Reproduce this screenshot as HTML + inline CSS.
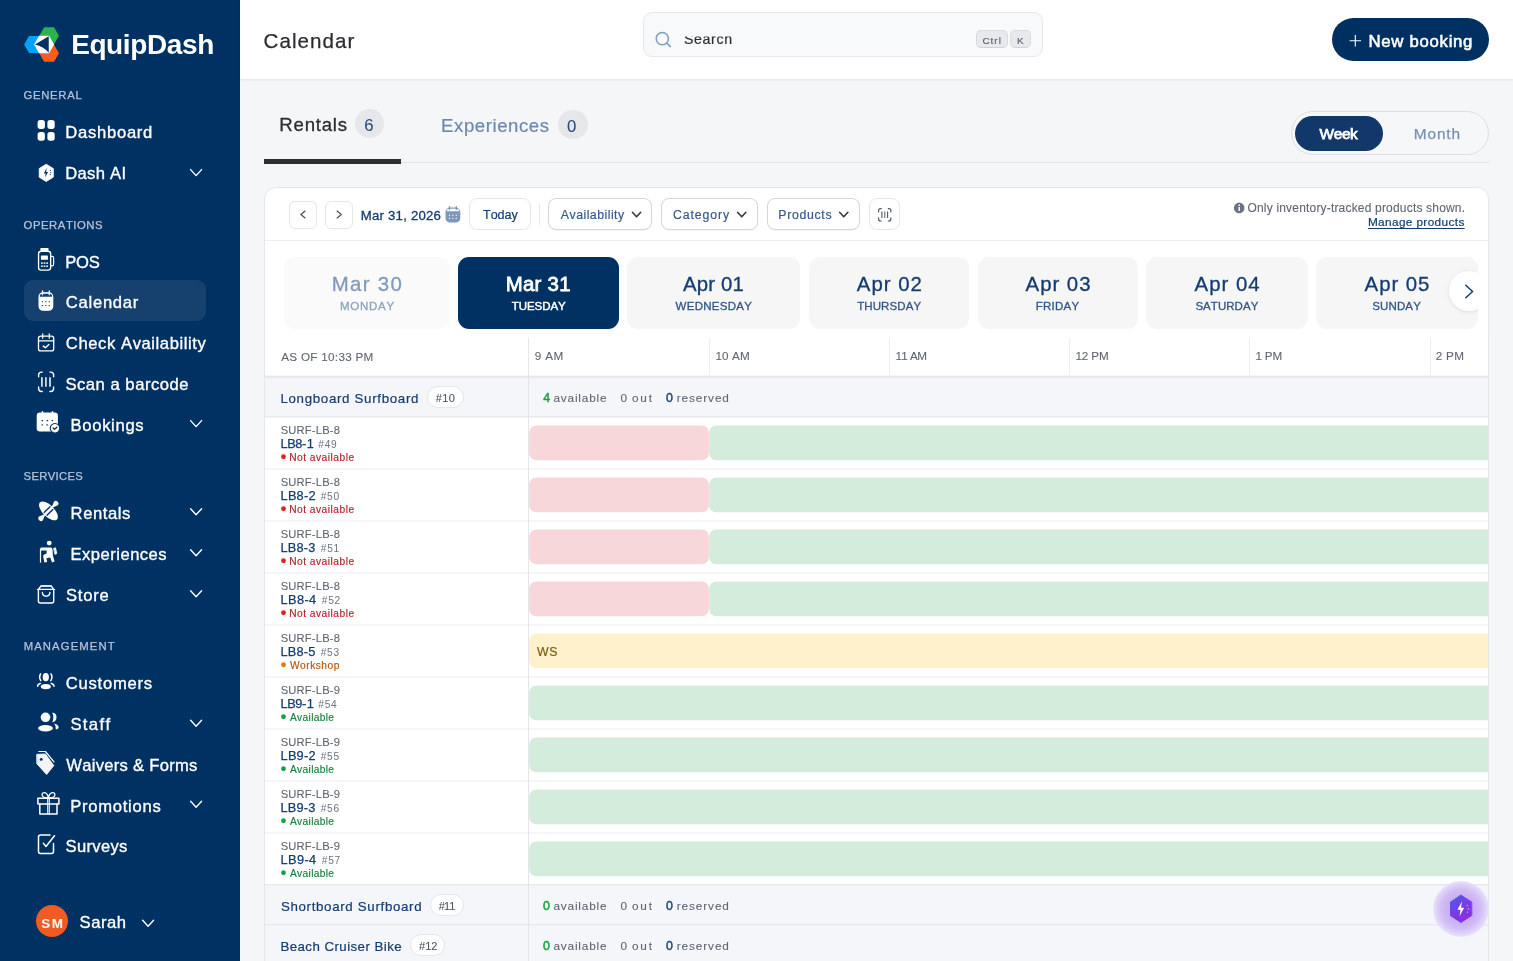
<!DOCTYPE html>
<html><head><meta charset="utf-8"><title>EquipDash - Calendar</title>
<style>
html,body{margin:0;padding:0;}
body{width:1513px;height:961px;overflow:hidden;position:relative;background:#f5f6f8;font-family:"Liberation Sans",sans-serif;}
.t{position:absolute;white-space:pre;line-height:1;font-kerning:none;font-family:"Liberation Sans",sans-serif;}
.b{position:absolute;box-sizing:border-box;}
svg{position:absolute;overflow:visible;}
</style></head><body>
<div class="b" style="left:0px;top:0px;width:240px;height:961px;background:#003163;"></div>
<div class="b" style="left:24.25px;top:280px;width:182.0px;height:40.5px;background:#16416f;border-radius:9px;"></div>
<div class="b" style="left:36.3px;top:905px;width:32.0px;height:32px;background:#f15a22;border-radius:50%;"></div>
<div class="b" style="left:240px;top:0px;width:1273px;height:79px;background:#fff;box-shadow:0 1px 2px rgba(20,30,50,.09);"></div>
<div class="b" style="left:643px;top:12px;width:400px;height:45px;background:#f8f9fb;border:1px solid #e6e8ec;border-radius:9px;"></div>
<div class="b" style="left:976px;top:30.4px;width:32px;height:18.0px;background:#e7e9ec;border:1px solid #d8dbe0;border-bottom-color:#cfd3d9;border-radius:5px;"></div>
<div class="b" style="left:1010px;top:30.4px;width:21px;height:18.0px;background:#e7e9ec;border:1px solid #d8dbe0;border-bottom-color:#cfd3d9;border-radius:5px;"></div>
<div class="b" style="left:1332px;top:18.25px;width:157.25px;height:42.25px;background:#002f61;border-radius:22px;"></div>
<div class="b" style="left:264px;top:162px;width:1225px;height:1px;background:#e1e3e7;"></div>
<div class="b" style="left:264px;top:159px;width:136.5px;height:4.5px;background:#2d2f33;"></div>
<div class="b" style="left:355px;top:108.75px;width:29.25px;height:28.75px;background:#e5e7eb;border-radius:50%;"></div>
<div class="b" style="left:557.5px;top:110px;width:30.5px;height:28.5px;background:#e5e7eb;border-radius:50%;"></div>
<div class="b" style="left:1290.5px;top:111.25px;width:198.75px;height:43.75px;background:#f6f7f9;border:1px solid #dcdfe4;border-radius:22px;"></div>
<div class="b" style="left:1295px;top:116px;width:88px;height:34.5px;background:#12386a;border-radius:18px;"></div>
<div class="b" style="left:264px;top:187px;width:1225px;height:793px;background:#fff;border:1px solid #e5e7eb;border-radius:12px 12px 0 0;"></div>
<div class="b" style="left:265px;top:240px;width:1223px;height:1.25px;background:#eceef1;"></div>
<div class="b" style="left:289.25px;top:200.75px;width:27.5px;height:27.75px;background:#fff;border:1px solid #e4e6ea;border-radius:6px;"></div>
<div class="b" style="left:325.25px;top:200.75px;width:27.75px;height:27.75px;background:#fff;border:1px solid #e4e6ea;border-radius:6px;"></div>
<div class="b" style="left:469.4px;top:198.4px;width:61.35000000000002px;height:31.599999999999994px;background:#fff;border:1px solid #e4e6ea;border-radius:8px;"></div>
<div class="b" style="left:539.25px;top:203.75px;width:1.0px;height:21.25px;background:#e5e7eb;"></div>
<div class="b" style="left:548.4px;top:198.4px;width:104.10000000000002px;height:31.599999999999994px;background:#fff;border:1px solid #d3d6db;border-radius:8px;box-shadow:0 1px 1px rgba(0,0,0,.04);"></div>
<div class="b" style="left:661.4px;top:198.4px;width:96.60000000000002px;height:31.599999999999994px;background:#fff;border:1px solid #d3d6db;border-radius:8px;box-shadow:0 1px 1px rgba(0,0,0,.04);"></div>
<div class="b" style="left:767px;top:198.4px;width:93px;height:31.599999999999994px;background:#fff;border:1px solid #d3d6db;border-radius:8px;box-shadow:0 1px 1px rgba(0,0,0,.04);"></div>
<div class="b" style="left:869px;top:198.4px;width:31px;height:31.599999999999994px;background:#fff;border:1px solid #e4e6ea;border-radius:8px;"></div>
<div class="b" style="left:284.25px;top:257.4px;width:165.75px;height:72.0px;background:#fafafa;border-radius:11px;"></div>
<div class="b" style="left:458.25px;top:257.4px;width:160.5px;height:72.0px;background:#003163;border-radius:11px;"></div>
<div class="b" style="left:627.25px;top:257.4px;width:172.5px;height:72.0px;background:#f6f6f7;border-radius:11px;"></div>
<div class="b" style="left:808.5px;top:257.4px;width:160.75px;height:72.0px;background:#f6f6f7;border-radius:11px;"></div>
<div class="b" style="left:977.75px;top:257.4px;width:160.0px;height:72.0px;background:#f6f6f7;border-radius:11px;"></div>
<div class="b" style="left:1146.25px;top:257.4px;width:161.75px;height:72.0px;background:#f6f6f7;border-radius:11px;"></div>
<div class="b" style="left:1316.25px;top:257.4px;width:161.25px;height:72.0px;background:#f6f6f7;border-radius:11px;"></div>
<div class="b" style="left:1440px;top:265px;width:37.5px;height:52px;overflow:hidden;"><div class="b" style="left:9.25px;top:6.25px;width:40px;height:40px;border-radius:50%;background:#fff;box-shadow:0 1px 4px rgba(0,0,0,.10);"></div></div>
<div class="b" style="left:709.0px;top:338px;width:1.0px;height:38px;background:#eceef1;"></div>
<div class="b" style="left:889.25px;top:338px;width:1.0px;height:38px;background:#eceef1;"></div>
<div class="b" style="left:1069.25px;top:338px;width:1.0px;height:38px;background:#eceef1;"></div>
<div class="b" style="left:1249.25px;top:338px;width:1.0px;height:38px;background:#eceef1;"></div>
<div class="b" style="left:1429.5px;top:338px;width:1.0px;height:38px;background:#eceef1;"></div>
<div class="b" style="left:265px;top:375px;width:1223px;height:1px;background:#f5f6f8;"></div>
<div class="b" style="left:265px;top:376px;width:1223px;height:1px;background:#e5e7eb;"></div>
<div class="b" style="left:265px;top:377px;width:1223px;height:1px;background:#ecedf2;"></div>
<div class="b" style="left:265px;top:378px;width:1223px;height:1px;background:#f1f3f7;"></div>
<div class="b" style="left:265px;top:379px;width:1223px;height:37px;background:#f4f6fa;"></div>
<div class="b" style="left:265px;top:416px;width:1223px;height:1px;background:#e6e8ed;"></div>
<div class="b" style="left:265px;top:417px;width:1223px;height:1px;background:#f3f4f7;"></div>
<div class="b" style="left:265px;top:884px;width:1223px;height:1px;background:#e6e8ed;"></div>
<div class="b" style="left:265px;top:885px;width:1223px;height:1px;background:#eef0f4;"></div>
<div class="b" style="left:265px;top:886px;width:1223px;height:38px;background:#f4f6fa;"></div>
<div class="b" style="left:265px;top:924px;width:1223px;height:1px;background:#e6e8ed;"></div>
<div class="b" style="left:265px;top:925px;width:1223px;height:1px;background:#eef0f4;"></div>
<div class="b" style="left:265px;top:926px;width:1223px;height:35px;background:#f4f6fa;"></div>
<div class="b" style="left:265px;top:468px;width:1223px;height:2px;background:#f6f6f8;"></div>
<div class="b" style="left:265px;top:520px;width:1223px;height:2px;background:#f6f6f8;"></div>
<div class="b" style="left:265px;top:572px;width:1223px;height:2px;background:#f6f6f8;"></div>
<div class="b" style="left:265px;top:624px;width:1223px;height:2px;background:#f6f6f8;"></div>
<div class="b" style="left:265px;top:676px;width:1223px;height:2px;background:#f6f6f8;"></div>
<div class="b" style="left:265px;top:728px;width:1223px;height:2px;background:#f6f6f8;"></div>
<div class="b" style="left:265px;top:780px;width:1223px;height:2px;background:#f6f6f8;"></div>
<div class="b" style="left:265px;top:832px;width:1223px;height:2px;background:#f6f6f8;"></div>
<div class="b" style="left:528.25px;top:338px;width:1.0px;height:623px;background:#e3e5ea;"></div>
<svg width="1513" height="961" viewBox="0 0 1513 961" style="left:0;top:0;"><path d="M537.1 425.4 H700.9 Q708.9 425.4 708.9 433.4 V452.2 Q708.9 460.2 700.9 460.2 H537.1 Q529.1 460.2 529.1 452.2 V433.4 Q529.1 425.4 537.1 425.4 Z" fill="#f8d7da"/><path d="M717.1 425.4 H1488 V460.2 H717.1 Q709.1 460.2 709.1 452.2 V433.4 Q709.1 425.4 717.1 425.4 Z" fill="#d4ecdb"/><circle cx="283.5" cy="456.8" r="2.45" fill="#dc2626"/><path d="M537.1 477.4 H700.9 Q708.9 477.4 708.9 485.4 V504.20000000000005 Q708.9 512.2 700.9 512.2 H537.1 Q529.1 512.2 529.1 504.20000000000005 V485.4 Q529.1 477.4 537.1 477.4 Z" fill="#f8d7da"/><path d="M717.1 477.4 H1488 V512.2 H717.1 Q709.1 512.2 709.1 504.20000000000005 V485.4 Q709.1 477.4 717.1 477.4 Z" fill="#d4ecdb"/><circle cx="283.5" cy="508.8" r="2.45" fill="#dc2626"/><path d="M537.1 529.4 H700.9 Q708.9 529.4 708.9 537.4 V556.2 Q708.9 564.2 700.9 564.2 H537.1 Q529.1 564.2 529.1 556.2 V537.4 Q529.1 529.4 537.1 529.4 Z" fill="#f8d7da"/><path d="M717.1 529.4 H1488 V564.2 H717.1 Q709.1 564.2 709.1 556.2 V537.4 Q709.1 529.4 717.1 529.4 Z" fill="#d4ecdb"/><circle cx="283.5" cy="560.8" r="2.45" fill="#dc2626"/><path d="M537.1 581.4 H700.9 Q708.9 581.4 708.9 589.4 V608.2 Q708.9 616.2 700.9 616.2 H537.1 Q529.1 616.2 529.1 608.2 V589.4 Q529.1 581.4 537.1 581.4 Z" fill="#f8d7da"/><path d="M717.1 581.4 H1488 V616.2 H717.1 Q709.1 616.2 709.1 608.2 V589.4 Q709.1 581.4 717.1 581.4 Z" fill="#d4ecdb"/><circle cx="283.5" cy="612.8" r="2.45" fill="#dc2626"/><path d="M537.1 633.4 H1488 V668.2 H537.1 Q529.1 668.2 529.1 660.2 V641.4 Q529.1 633.4 537.1 633.4 Z" fill="#fff1cc"/><circle cx="283.5" cy="664.8" r="2.45" fill="#e07b0c"/><path d="M537.1 685.4 H1488 V720.2 H537.1 Q529.1 720.2 529.1 712.2 V693.4 Q529.1 685.4 537.1 685.4 Z" fill="#d4ecdb"/><circle cx="283.5" cy="716.8" r="2.45" fill="#16a34a"/><path d="M537.1 737.4 H1488 V772.2 H537.1 Q529.1 772.2 529.1 764.2 V745.4 Q529.1 737.4 537.1 737.4 Z" fill="#d4ecdb"/><circle cx="283.5" cy="768.8" r="2.45" fill="#16a34a"/><path d="M537.1 789.4 H1488 V824.2 H537.1 Q529.1 824.2 529.1 816.2 V797.4 Q529.1 789.4 537.1 789.4 Z" fill="#d4ecdb"/><circle cx="283.5" cy="820.8" r="2.45" fill="#16a34a"/><path d="M537.1 841.4 H1488 V876.2 H537.1 Q529.1 876.2 529.1 868.2 V849.4 Q529.1 841.4 537.1 841.4 Z" fill="#d4ecdb"/><circle cx="283.5" cy="872.8" r="2.45" fill="#16a34a"/></svg>
<div class="b" style="left:1488px;top:338px;width:25px;height:623px;background:#f5f6f8;"></div>
<div class="b" style="left:1487.75px;top:338px;width:1.0px;height:623px;background:#e3e5ea;"></div>
<div class="b" style="left:426.5px;top:386.4px;width:37.0px;height:22.0px;background:#fff;border:1px solid #e4e6ea;border-radius:11px;"></div>
<div class="b" style="left:429.6px;top:894.4px;width:34.0px;height:22.0px;background:#fff;border:1px solid #e4e6ea;border-radius:11px;"></div>
<div class="b" style="left:410.2px;top:934.4px;width:35.10000000000002px;height:22.0px;background:#fff;border:1px solid #e4e6ea;border-radius:11px;"></div>
<div class="b" style="left:1433.2px;top:881px;width:55.59999999999991px;height:56px;border-radius:50%;background:radial-gradient(circle closest-side, #c9aff3 0%, #caB1f4 50%, #d3bff6 72%, #dfd2f9 88%, #eae3fb 100%);"></div>
<svg width="1513" height="961" viewBox="0 0 1513 961" style="left:0;top:0;" fill="none" stroke-linecap="round" stroke-linejoin="round">
<polygon points="43.83,44.50 38.91,53.03 29.05,53.03 24.13,44.50 29.05,35.97 38.91,35.97" fill="#00a2ff"/>
<polygon points="58.98,35.75 54.05,44.28 44.20,44.28 39.28,35.75 44.20,27.22 54.05,27.22" fill="#2bb24c"/>
<polygon points="58.98,53.25 54.05,61.78 44.20,61.78 39.28,53.25 44.20,44.72 54.05,44.72" fill="#f95d1e"/>
<polygon points="54.08,44.50 49.08,53.16 39.08,53.16 34.08,44.50 39.08,35.84 49.08,35.84" fill="#fff"/>
<path d="M34.9 44.5 L48.75 36.3 L48.75 52.7 Q43.5 46.6 34.9 44.5 Z" fill="#003163"/>
<rect x="37.6" y="120.1" width="7.3" height="8.8" rx="2.6" fill="#fff"/>
<rect x="47.4" y="120.1" width="7.3" height="8.8" rx="2.6" fill="#fff"/>
<rect x="37.6" y="131.9" width="7.3" height="8.8" rx="2.6" fill="#fff"/>
<rect x="47.4" y="131.9" width="7.3" height="8.8" rx="2.6" fill="#fff"/>
<g transform="translate(46.2 172.85) scale(0.93 1) translate(-46.2 -172.85)"><polygon points="53.73,177.20 46.20,181.55 38.67,177.20 38.67,168.50 46.20,164.15 53.73,168.50" fill="#fff" stroke="#fff" stroke-width="0.8"/></g>
<path d="M46.6 167.9 L43.9 173.4 L45.7 173.4 L45.2 177.5 L48 172 L46.2 172 Z" fill="#003163"/>
<circle cx="50.2" cy="170.4" r="0.55" fill="#003163"/><circle cx="50.8" cy="172.4" r="0.55" fill="#003163"/><circle cx="50.2" cy="174.4" r="0.55" fill="#003163"/>
<path d="M190.6 169.6 L196.1 175.6 L201.6 169.6" stroke="#fff" stroke-width="1.4"/>
<path d="M190.6 420.6 L196.1 426.6 L201.6 420.6" stroke="#fff" stroke-width="1.4"/>
<path d="M190.6 508.8 L196.1 514.8 L201.6 508.8" stroke="#fff" stroke-width="1.4"/>
<path d="M190.6 549.8 L196.1 555.8 L201.6 549.8" stroke="#fff" stroke-width="1.4"/>
<path d="M190.6 590.8 L196.1 596.8 L201.6 590.8" stroke="#fff" stroke-width="1.4"/>
<path d="M190.6 720.3 L196.1 726.3 L201.6 720.3" stroke="#fff" stroke-width="1.4"/>
<path d="M190.6 801.3 L196.1 807.3 L201.6 801.3" stroke="#fff" stroke-width="1.4"/>
<path d="M142.6 920.3 L148.1 926.3 L153.6 920.3" stroke="#fff" stroke-width="1.4"/>
<rect x="38.55" y="251.2" width="12.1" height="18.9" rx="2.6" stroke="#fff" stroke-width="1.35"/>
<rect x="40.4" y="248" width="8.1" height="3.2" rx="0.6" fill="#fff"/>
<path d="M50.8 256.4 H52.2 Q53.6 256.4 53.6 257.8 V264.4 Q53.6 265.8 52.2 265.8 H50.8" stroke="#fff" stroke-width="1.2"/>
<rect x="40.9" y="255.6" width="7" height="4.2" rx="0.4" fill="#fff"/>
<rect x="41" y="262.4" width="1.8" height="1.4" fill="#fff"/>
<rect x="43.6" y="262.4" width="1.8" height="1.4" fill="#fff"/>
<rect x="46.2" y="262.4" width="1.8" height="1.4" fill="#fff"/>
<rect x="41" y="265.5" width="1.8" height="1.4" fill="#fff"/>
<rect x="43.6" y="265.5" width="1.8" height="1.4" fill="#fff"/>
<rect x="46.2" y="265.5" width="1.8" height="1.4" fill="#fff"/>
<rect x="39.1" y="292.81600000000003" width="13.599999999999998" height="17.38399999999999" rx="3.9959999999999996" stroke="#fff" stroke-width="1.2" fill="#fff"/>
<path d="M39.8 296.66 V296.05400000000003 Q39.8 293.731 42.94 293.731 H48.86 Q52.0 293.731 52.0 296.05400000000003 V296.66 Z" fill="#16416f"/>
<path d="M42.496 290.90000000000003 V294.64000000000004" stroke="#fff" stroke-width="1.3"/>
<path d="M49.304 290.90000000000003 V294.64000000000004" stroke="#fff" stroke-width="1.3"/>
<rect x="41.896" y="301.16" width="1.2" height="1.1" fill="#16416f"/>
<rect x="45.3" y="301.16" width="1.2" height="1.1" fill="#16416f"/>
<rect x="48.704" y="301.16" width="1.2" height="1.1" fill="#16416f"/>
<rect x="41.896" y="304.998" width="1.2" height="1.1" fill="#16416f"/>
<rect x="45.3" y="304.998" width="1.2" height="1.1" fill="#16416f"/>
<rect x="48.704" y="304.998" width="1.2" height="1.1" fill="#16416f"/>
<rect x="446.1" y="208.204" width="13.600000000000012" height="13.795999999999985" rx="3.9960000000000035" stroke="#7e97bb" stroke-width="1.2" fill="#7e97bb"/>
<path d="M446.8 211.19 V210.701 Q446.8 208.8265 449.94 208.8265 H455.86 Q459.0 208.8265 459.0 210.701 V211.19 Z" fill="#fff"/>
<path d="M449.496 206.60000000000002 V209.56" stroke="#7e97bb" stroke-width="1.3"/>
<path d="M456.30400000000003 206.60000000000002 V209.56" stroke="#7e97bb" stroke-width="1.3"/>
<rect x="448.89599999999996" y="214.715" width="1.2" height="1.1" fill="#fff"/>
<rect x="452.29999999999995" y="214.715" width="1.2" height="1.1" fill="#fff"/>
<rect x="455.704" y="214.715" width="1.2" height="1.1" fill="#fff"/>
<rect x="448.89599999999996" y="217.81199999999998" width="1.2" height="1.1" fill="#fff"/>
<rect x="452.29999999999995" y="217.81199999999998" width="1.2" height="1.1" fill="#fff"/>
<rect x="455.704" y="217.81199999999998" width="1.2" height="1.1" fill="#fff"/>
<rect x="38.5" y="336.2" width="15.2" height="14.7" rx="2.2" stroke="#fff" stroke-width="1.3"/>
<path d="M38.5 340.9 H53.7 M42.65 333.9 V338.2 M49.3 333.9 V338.2" stroke="#fff" stroke-width="1.3"/>
<path d="M43.3 346.1 L45.4 347.8 L48.9 344.6" stroke="#fff" stroke-width="1.4"/>
<path d="M38.6 376.70000000000005 V375.1 Q38.6 372.1 41.6 372.1 H42.28 M49.92 372.1 H50.6 Q53.6 372.1 53.6 375.1 V376.70000000000005 M53.6 386.9 V388.5 Q53.6 391.5 50.6 391.5 H49.92 M42.28 391.5 H41.6 Q38.6 391.5 38.6 388.5 V386.9" stroke="#fff" stroke-width="1.4"/>
<path d="M41.9 377.3 V386.7" stroke="#fff" stroke-width="1.5" stroke-linecap="butt" opacity="1"/>
<path d="M45.9 377.3 V386.7" stroke="#fff" stroke-width="1.7" stroke-linecap="butt" opacity="0.85"/>
<path d="M50 377.3 V386.7" stroke="#fff" stroke-width="1.5" stroke-linecap="butt" opacity="1"/>
<path d="M878.6 211.9 V210.6 Q878.6 208.6 880.6 208.6 H881.24 M888.26 208.6 H888.9 Q890.9 208.6 890.9 210.6 V211.9 M890.9 217.7 V219 Q890.9 221 888.9 221 H888.26 M881.24 221 H880.6 Q878.6 221 878.6 219 V217.7" stroke="#4b5563" stroke-width="1.15"/>
<path d="M881.9 211.6 V218" stroke="#4b5563" stroke-width="1.1" stroke-linecap="butt" opacity="1"/>
<path d="M884.75 211.6 V218" stroke="#4b5563" stroke-width="1.2" stroke-linecap="butt" opacity="0.8"/>
<path d="M887.6 211.6 V218" stroke="#4b5563" stroke-width="1.1" stroke-linecap="butt" opacity="1"/>
<rect x="36.7" y="412.6" width="21.2" height="18.9" rx="3.2" fill="#fff"/>
<path d="M42.5 411.9 V414 M52.5 411.9 V414" stroke="#fff" stroke-width="1.6"/>
<rect x="41.599999999999994" y="420.0" width="1.4" height="1.2" fill="#003163"/>
<rect x="46.599999999999994" y="420.0" width="1.4" height="1.2" fill="#003163"/>
<rect x="51.699999999999996" y="420.0" width="1.4" height="1.2" fill="#003163"/>
<rect x="41.5" y="424.29999999999995" width="1.4" height="1.2" fill="#003163"/>
<rect x="46.5" y="424.29999999999995" width="1.4" height="1.2" fill="#003163"/>
<circle cx="55" cy="428.2" r="4.75" fill="#fff" stroke="#003163" stroke-width="1.1"/>
<path d="M53.1 428 L54.55 429.25 L56.9 427.3" stroke="#003163" stroke-width="1.3"/>
<g transform="rotate(-45 48.45 510.95)">
<ellipse cx="48.45" cy="510.95" rx="5.7" ry="12" fill="#fff"/>
<rect x="43.85" y="508.35" width="9.2" height="1.45" rx="0.4" fill="#003163"/>
<rect x="43.85" y="512.25" width="9.2" height="1.45" rx="0.4" fill="#003163"/>
<rect x="40.95" y="510.15" width="15" height="1.6" fill="#fff"/>
<path d="M54.650000000000006 510.15 L59.050000000000004 508.25 Q61.550000000000004 508.25 61.550000000000004 510.95 Q61.550000000000004 513.65 59.050000000000004 513.65 L54.650000000000006 511.75 Z" fill="#fff"/>
<path d="M42.25 510.15 L37.85 508.25 Q35.35 508.25 35.35 510.95 Q35.35 513.65 37.85 513.65 L42.25 511.75 Z" fill="#fff"/>
</g>
<circle cx="49.2" cy="543.1" r="2.45" fill="#fff"/>
<path d="M40.5 548.6 V562.6" stroke="#fff" stroke-width="1.2" stroke-linecap="butt"/>
<path d="M40.6 547.6 H50.6 Q52.3 547.6 52.5 549.2 L53 556 L54.6 561.6 L52 562.4 L50.2 557.6 L46.4 558.2 L47.2 562 L44.4 562.6 L43.2 556.6 Q43 555.2 44.2 554.6 L46.6 553.4 L46.6 550.6 H40.6 Z" fill="#fff"/>
<path d="M53.9 548.3 L55.5 547.8 L56.8 553.6 L55.2 554.2 Z" fill="#fff" stroke="#fff" stroke-width="0.8"/>
<path d="M38.4 589.4 V601 Q38.4 603 40.4 603 H51.7 Q53.7 603 53.7 601 V589.4 M37.6 589.4 H54.5 M38.4 589.4 L41 585.9 H51.2 L53.7 589.4" stroke="#fff" stroke-width="1.4"/>
<path d="M41 586 H51.2" stroke="#dfe5ec" stroke-width="1.9" stroke-linecap="butt"/>
<path d="M42.4 592.5 Q42.6 596.2 46.15 596.2 Q49.7 596.2 49.9 592.5" stroke="#fff" stroke-width="1.4"/>
<ellipse cx="45.8" cy="677.2" rx="3.1" ry="4.1" fill="#fff"/>
<ellipse cx="45.8" cy="686.6" rx="5" ry="2.6" fill="#fff"/>
<path d="M40.6 674 Q38.6 677.2 40.8 680.6 M51 674 Q53 677.2 50.8 680.6" stroke="#fff" stroke-width="1.5"/>
<path d="M37.6 686.2 Q37.6 683.8 40.4 683.4 M54 686.2 Q54 683.8 51.2 683.4" stroke="#fff" stroke-width="1.5"/>
<circle cx="45.5" cy="717.3" r="4.8" fill="#fff"/>
<ellipse cx="45.5" cy="728.2" rx="7.4" ry="3.2" fill="#fff"/>
<path d="M52.2 712.6 Q56.6 713 56.5 717.4 Q56.4 721.6 52.2 722.2 Q54.6 717.4 52.2 712.6 Z" fill="#fff"/>
<path d="M54.2 723.6 Q58.6 724.6 58.7 727.6 Q58.4 729.4 55.8 729.6 Q56.2 726 54.2 723.6 Z" fill="#fff"/>
<path d="M37.1 754.4 L45.4 754 L53.8 765.6 L46.6 774.4 L37.1 764 Z" fill="#f4f5f7" stroke="#f4f5f7" stroke-width="1" />
<circle cx="41.2" cy="759.4" r="1.45" fill="#003163"/>
<path d="M38.8 751.5 H45.4 L54 761.9" stroke="#fff" stroke-width="1.2"/>
<rect x="37.9" y="798.3" width="21" height="5.6" stroke="#fff" stroke-width="1.5"/>
<path d="M39.8 804 V814.1 H57 V804" stroke="#fff" stroke-width="1.5"/>
<path d="M47.7 798.3 V814 M49.3 798.3 V814" stroke="#fff" stroke-width="1.05"/>
<path d="M48.4 797.8 Q42.4 798 42.1 795 Q42.2 792.4 44.8 792.6 Q47.6 793.4 48.4 797.8 Q49.2 793.4 52.2 792.6 Q54.8 792.4 54.9 795 Q54.6 798 48.4 797.8" stroke="#fff" stroke-width="1.3"/>
<path d="M50 835 H40.6 Q38.5 835 38.5 837 V851.6 Q38.5 853.6 40.6 853.6 H51.4 Q53.5 853.6 53.5 851.6 V843.6" stroke="#fff" stroke-width="1.5"/>
<path d="M43.4 843.3 L46 846.5 L54.5 835.7" stroke="#fff" stroke-width="1.5"/>
<circle cx="662.3" cy="38.6" r="6.1" stroke="#7a9cc0" stroke-width="1.5"/><path d="M666.9 43.2 L670.4 46.6" stroke="#7a9cc0" stroke-width="1.5"/>
<path d="M1349.6 40.8 H1361 M1355.3 35.1 V46.5" stroke="#fff" stroke-width="1.1" stroke-linecap="butt"/>
<path d="M305.1 211.1 L300.9 214.5 L305.1 217.9" stroke="#4b5563" stroke-width="1.35"/>
<path d="M337.1 211.1 L341.3 214.5 L337.1 217.9" stroke="#4b5563" stroke-width="1.35"/>
<path d="M632.4 212.3 L636.55 216.8 L640.6999999999999 212.3" stroke="#2f343d" stroke-width="1.5"/>
<path d="M737.6 212.3 L741.75 216.8 L745.9 212.3" stroke="#2f343d" stroke-width="1.5"/>
<path d="M839.6 212.3 L843.75 216.8 L847.9 212.3" stroke="#2f343d" stroke-width="1.5"/>
<circle cx="1239.2" cy="207.9" r="5.3" fill="#6b7280"/><rect x="1238.5" y="206.9" width="1.5" height="4" fill="#fff"/><rect x="1238.5" y="204.4" width="1.5" height="1.5" fill="#fff"/>
<path d="M1465.8 285.2 L1472.6 291.5 L1465.8 297.8" stroke="#143c70" stroke-width="1.5"/>
<defs><linearGradient id="fg" x1="0.1" y1="0" x2="0.7" y2="1"><stop offset="0" stop-color="#4a5eea"/><stop offset="0.55" stop-color="#7a3ae6"/><stop offset="1" stop-color="#8d2fdc"/></linearGradient></defs>
<g transform="translate(1461 908.8) scale(0.885 1) translate(-1461 -908.8)"><polygon points="1472.86,915.65 1461.00,922.50 1449.14,915.65 1449.14,901.95 1461.00,895.10 1472.86,901.95" fill="url(#fg)" stroke="url(#fg)" stroke-width="1"/></g>
<path d="M1462 901.6 L1457.4 909.8 L1460.5 909.8 L1459.5 916.2 L1464.2 907.7 L1461.1 907.7 Z" fill="#fff"/>
<circle cx="1467.2" cy="905.6" r="0.8" fill="#b59af2"/><circle cx="1468.4" cy="908.8" r="0.9" fill="#b59af2"/><circle cx="1467.5" cy="912.2" r="0.7" fill="#b59af2"/>
</svg>
<div style="position:absolute;left:0;top:0;width:1513px;height:961px;will-change:transform;">
<span class="t" style="left:71.13px;top:31.00px;font-size:28px;color:#fff;letter-spacing:-0.391px;font-weight:700;">EquipDash</span>
<span class="t" style="left:23.56px;top:90.00px;font-size:11.3px;color:#b7c3d6;letter-spacing:0.698px;-webkit-text-stroke:0.25px #b7c3d6;">GENERAL</span>
<span class="t" style="left:23.59px;top:220.00px;font-size:11.3px;color:#b7c3d6;letter-spacing:0.552px;-webkit-text-stroke:0.25px #b7c3d6;">OPERATIONS</span>
<span class="t" style="left:23.61px;top:471.00px;font-size:11.3px;color:#b7c3d6;letter-spacing:0.305px;-webkit-text-stroke:0.25px #b7c3d6;">SERVICES</span>
<span class="t" style="left:23.70px;top:641.00px;font-size:11.3px;color:#b7c3d6;letter-spacing:1.105px;-webkit-text-stroke:0.25px #b7c3d6;">MANAGEMENT</span>
<span class="t" style="left:65.31px;top:125.00px;font-size:16.6px;color:#fff;letter-spacing:0.734px;-webkit-text-stroke:0.35px #fff;">Dashboard</span>
<span class="t" style="left:65.31px;top:166.00px;font-size:16.6px;color:#fff;letter-spacing:0.291px;-webkit-text-stroke:0.35px #fff;">Dash AI</span>
<span class="t" style="left:65.31px;top:255.00px;font-size:16.6px;color:#fff;letter-spacing:-0.266px;-webkit-text-stroke:0.35px #fff;">POS</span>
<span class="t" style="left:65.83px;top:295.00px;font-size:16.6px;color:#fff;letter-spacing:0.736px;-webkit-text-stroke:0.35px #fff;">Calendar</span>
<span class="t" style="left:65.83px;top:336.00px;font-size:16.6px;color:#fff;letter-spacing:0.585px;-webkit-text-stroke:0.35px #fff;">Check Availability</span>
<span class="t" style="left:65.42px;top:377.00px;font-size:16.6px;color:#fff;letter-spacing:0.528px;-webkit-text-stroke:0.35px #fff;">Scan a barcode</span>
<span class="t" style="left:70.56px;top:418.00px;font-size:16.6px;color:#fff;letter-spacing:0.689px;-webkit-text-stroke:0.35px #fff;">Bookings</span>
<span class="t" style="left:70.56px;top:506.00px;font-size:16.6px;color:#fff;letter-spacing:0.596px;-webkit-text-stroke:0.35px #fff;">Rentals</span>
<span class="t" style="left:70.56px;top:547.00px;font-size:16.6px;color:#fff;letter-spacing:0.476px;-webkit-text-stroke:0.35px #fff;">Experiences</span>
<span class="t" style="left:65.92px;top:588.00px;font-size:16.6px;color:#fff;letter-spacing:0.804px;-webkit-text-stroke:0.35px #fff;">Store</span>
<span class="t" style="left:65.83px;top:676.00px;font-size:16.6px;color:#fff;letter-spacing:0.761px;-webkit-text-stroke:0.35px #fff;">Customers</span>
<span class="t" style="left:70.42px;top:717.00px;font-size:16.6px;color:#fff;letter-spacing:1.385px;-webkit-text-stroke:0.35px #fff;">Staff</span>
<span class="t" style="left:66.30px;top:758.00px;font-size:16.6px;color:#fff;letter-spacing:0.275px;-webkit-text-stroke:0.35px #fff;">Waivers &amp; Forms</span>
<span class="t" style="left:70.21px;top:799.00px;font-size:16.6px;color:#fff;letter-spacing:0.739px;-webkit-text-stroke:0.35px #fff;">Promotions</span>
<span class="t" style="left:65.62px;top:839.00px;font-size:16.6px;color:#fff;letter-spacing:0.307px;-webkit-text-stroke:0.35px #fff;">Surveys</span>
<span class="t" style="left:41.21px;top:917.00px;font-size:13.5px;color:#fff;letter-spacing:1.442px;font-weight:700;">SM</span>
<span class="t" style="left:79.62px;top:915.00px;font-size:16.6px;color:#fff;letter-spacing:0.546px;-webkit-text-stroke:0.35px #fff;">Sarah</span>
<span class="t" style="left:263.58px;top:31.00px;font-size:20.6px;color:#2b2d31;letter-spacing:1.042px;-webkit-text-stroke:0.25px #2b2d31;">Calendar</span>
<span class="t" style="left:683.96px;top:32.00px;font-size:14.2px;color:#2b2d31;letter-spacing:0.625px;-webkit-text-stroke:0.2px #2b2d31;clip-path:inset(4.40px -5px 0 -5px);">Search</span>
<span class="t" style="left:982.50px;top:36.00px;font-size:9.9px;color:#5f6775;letter-spacing:0.990px;-webkit-text-stroke:0.2px #5f6775;">Ctrl</span>
<span class="t" style="left:1017.09px;top:36.00px;font-size:9.9px;color:#5f6775;letter-spacing:0.000px;-webkit-text-stroke:0.2px #5f6775;">K</span>
<span class="t" style="left:1368.40px;top:34.00px;font-size:16.8px;color:#fff;letter-spacing:0.704px;-webkit-text-stroke:0.55px #fff;">New booking</span>
<span class="t" style="left:279.37px;top:116.00px;font-size:18.6px;color:#2b2d31;letter-spacing:0.764px;-webkit-text-stroke:0.3px #2b2d31;">Rentals</span>
<span class="t" style="left:364.20px;top:118.00px;font-size:16.8px;color:#2a4d7c;letter-spacing:0.000px;-webkit-text-stroke:0.1px #2a4d7c;">6</span>
<span class="t" style="left:441.07px;top:117.00px;font-size:18.6px;color:#6b88ad;letter-spacing:0.564px;-webkit-text-stroke:0.2px #6b88ad;">Experiences</span>
<span class="t" style="left:566.89px;top:119.00px;font-size:16.8px;color:#2a4d7c;letter-spacing:0.000px;-webkit-text-stroke:0.1px #2a4d7c;">0</span>
<span class="t" style="left:1319.56px;top:126.00px;font-size:15.4px;color:#fff;letter-spacing:-0.357px;-webkit-text-stroke:0.75px #fff;">Week</span>
<span class="t" style="left:1413.86px;top:126.00px;font-size:15.4px;color:#7690b2;letter-spacing:0.853px;-webkit-text-stroke:0.25px #7690b2;">Month</span>
<span class="t" style="left:360.82px;top:209.00px;font-size:13.2px;color:#143c70;letter-spacing:0.212px;-webkit-text-stroke:0.3px #143c70;">Mar 31, 2026</span>
<span class="t" style="left:483.02px;top:209.00px;font-size:12.6px;color:#143c70;letter-spacing:-0.078px;-webkit-text-stroke:0.2px #143c70;">Today</span>
<span class="t" style="left:560.83px;top:209.00px;font-size:12.3px;color:#355a8b;letter-spacing:0.476px;-webkit-text-stroke:0.2px #355a8b;">Availability</span>
<span class="t" style="left:672.98px;top:209.00px;font-size:12.3px;color:#355a8b;letter-spacing:0.899px;-webkit-text-stroke:0.2px #355a8b;">Category</span>
<span class="t" style="left:778.34px;top:209.00px;font-size:12.3px;color:#355a8b;letter-spacing:0.673px;-webkit-text-stroke:0.2px #355a8b;">Products</span>
<span class="t" style="left:1247.48px;top:202.00px;font-size:12px;color:#5f6672;letter-spacing:0.184px;-webkit-text-stroke:0.1px #5f6672;">Only inventory-tracked products shown.</span>
<span class="t" style="left:1367.88px;top:217.00px;font-size:11.8px;color:#143c70;letter-spacing:0.376px;-webkit-text-stroke:0.2px #143c70;text-decoration:underline;text-underline-offset:1.5px;text-decoration-thickness:1px;">Manage products</span>
<span class="t" style="left:331.73px;top:274.00px;font-size:20.4px;color:#809abc;letter-spacing:1.336px;-webkit-text-stroke:0.3px #809abc;">Mar 30</span>
<span class="t" style="left:339.96px;top:301.00px;font-size:11.5px;color:#8ba2c0;letter-spacing:0.734px;-webkit-text-stroke:0.3px #8ba2c0;">MONDAY</span>
<span class="t" style="left:505.73px;top:274.00px;font-size:20.4px;color:#fff;letter-spacing:0.276px;-webkit-text-stroke:0.8px #fff;">Mar 31</span>
<span class="t" style="left:511.72px;top:301.00px;font-size:11.5px;color:#fff;letter-spacing:-0.043px;-webkit-text-stroke:0.45px #fff;">TUESDAY</span>
<span class="t" style="left:683.11px;top:274.00px;font-size:20.4px;color:#143c70;letter-spacing:0.126px;-webkit-text-stroke:0.3px #143c70;">Apr 01</span>
<span class="t" style="left:675.60px;top:301.00px;font-size:11.5px;color:#2f5688;letter-spacing:0.267px;-webkit-text-stroke:0.3px #2f5688;">WEDNESDAY</span>
<span class="t" style="left:856.86px;top:274.00px;font-size:20.4px;color:#143c70;letter-spacing:0.982px;-webkit-text-stroke:0.3px #143c70;">Apr 02</span>
<span class="t" style="left:857.14px;top:301.00px;font-size:11.5px;color:#2f5688;letter-spacing:0.101px;-webkit-text-stroke:0.3px #2f5688;">THURSDAY</span>
<span class="t" style="left:1025.61px;top:274.00px;font-size:20.4px;color:#143c70;letter-spacing:0.956px;-webkit-text-stroke:0.3px #143c70;">Apr 03</span>
<span class="t" style="left:1035.71px;top:301.00px;font-size:11.5px;color:#2f5688;letter-spacing:0.245px;-webkit-text-stroke:0.3px #2f5688;">FRIDAY</span>
<span class="t" style="left:1194.61px;top:274.00px;font-size:20.4px;color:#143c70;letter-spacing:0.997px;-webkit-text-stroke:0.3px #143c70;">Apr 04</span>
<span class="t" style="left:1195.38px;top:301.00px;font-size:11.5px;color:#2f5688;letter-spacing:0.051px;-webkit-text-stroke:0.3px #2f5688;">SATURDAY</span>
<span class="t" style="left:1364.61px;top:274.00px;font-size:20.4px;color:#143c70;letter-spacing:0.948px;-webkit-text-stroke:0.3px #143c70;">Apr 05</span>
<span class="t" style="left:1372.13px;top:301.00px;font-size:11.5px;color:#2f5688;letter-spacing:0.160px;-webkit-text-stroke:0.3px #2f5688;">SUNDAY</span>
<span class="t" style="left:281.28px;top:351.00px;font-size:11.7px;color:#5f6672;letter-spacing:0.284px;-webkit-text-stroke:0.1px #5f6672;">AS OF 10:33 PM</span>
<span class="t" style="left:534.70px;top:350.00px;font-size:11.7px;color:#5f6672;letter-spacing:0.434px;-webkit-text-stroke:0.1px #5f6672;">9 AM</span>
<span class="t" style="left:715.41px;top:350.00px;font-size:11.7px;color:#5f6672;letter-spacing:0.109px;-webkit-text-stroke:0.1px #5f6672;">10 AM</span>
<span class="t" style="left:895.41px;top:350.00px;font-size:11.7px;color:#5f6672;letter-spacing:-0.578px;-webkit-text-stroke:0.1px #5f6672;">11 AM</span>
<span class="t" style="left:1075.41px;top:350.00px;font-size:11.7px;color:#5f6672;letter-spacing:-0.141px;-webkit-text-stroke:0.1px #5f6672;">12 PM</span>
<span class="t" style="left:1255.41px;top:350.00px;font-size:11.7px;color:#5f6672;letter-spacing:-0.186px;-webkit-text-stroke:0.1px #5f6672;">1 PM</span>
<span class="t" style="left:1435.71px;top:350.00px;font-size:11.7px;color:#5f6672;letter-spacing:0.297px;-webkit-text-stroke:0.1px #5f6672;">2 PM</span>
<span class="t" style="left:280.41px;top:392.00px;font-size:13.3px;color:#143c70;letter-spacing:0.686px;-webkit-text-stroke:0.2px #143c70;">Longboard Surfboard</span>
<span class="t" style="left:435.65px;top:393.00px;font-size:11px;color:#4b5563;letter-spacing:0.412px;-webkit-text-stroke:0.1px #4b5563;">#10</span>
<span class="t" style="left:543.14px;top:392.00px;font-size:12.4px;color:#18a13a;letter-spacing:0.000px;-webkit-text-stroke:0.45px #18a13a;">4</span>
<span class="t" style="left:553.45px;top:393.00px;font-size:11.8px;color:#5f6672;letter-spacing:0.818px;-webkit-text-stroke:0.1px #5f6672;">available</span>
<span class="t" style="left:620.49px;top:393.00px;font-size:11.8px;color:#5f6672;letter-spacing:0.000px;-webkit-text-stroke:0.1px #5f6672;">0</span>
<span class="t" style="left:631.95px;top:393.00px;font-size:11.8px;color:#5f6672;letter-spacing:1.789px;-webkit-text-stroke:0.1px #5f6672;">out</span>
<span class="t" style="left:666.04px;top:392.00px;font-size:12.4px;color:#1d4577;letter-spacing:0.000px;-webkit-text-stroke:0.45px #1d4577;">0</span>
<span class="t" style="left:676.77px;top:393.00px;font-size:11.8px;color:#5f6672;letter-spacing:0.891px;-webkit-text-stroke:0.1px #5f6672;">reserved</span>
<span class="t" style="left:280.90px;top:900.00px;font-size:13.3px;color:#143c70;letter-spacing:0.676px;-webkit-text-stroke:0.2px #143c70;">Shortboard Surfboard</span>
<span class="t" style="left:438.80px;top:901.00px;font-size:11px;color:#4b5563;letter-spacing:-0.934px;-webkit-text-stroke:0.1px #4b5563;">#11</span>
<span class="t" style="left:542.94px;top:900.00px;font-size:12.4px;color:#18a13a;letter-spacing:0.000px;-webkit-text-stroke:0.45px #18a13a;">0</span>
<span class="t" style="left:553.45px;top:901.00px;font-size:11.8px;color:#5f6672;letter-spacing:0.818px;-webkit-text-stroke:0.1px #5f6672;">available</span>
<span class="t" style="left:620.49px;top:901.00px;font-size:11.8px;color:#5f6672;letter-spacing:0.000px;-webkit-text-stroke:0.1px #5f6672;">0</span>
<span class="t" style="left:631.95px;top:901.00px;font-size:11.8px;color:#5f6672;letter-spacing:1.789px;-webkit-text-stroke:0.1px #5f6672;">out</span>
<span class="t" style="left:666.04px;top:900.00px;font-size:12.4px;color:#1d4577;letter-spacing:0.000px;-webkit-text-stroke:0.45px #1d4577;">0</span>
<span class="t" style="left:676.77px;top:901.00px;font-size:11.8px;color:#5f6672;letter-spacing:0.891px;-webkit-text-stroke:0.1px #5f6672;">reserved</span>
<span class="t" style="left:280.41px;top:940.00px;font-size:13.3px;color:#143c70;letter-spacing:0.435px;-webkit-text-stroke:0.2px #143c70;">Beach Cruiser Bike</span>
<span class="t" style="left:418.90px;top:941.00px;font-size:11px;color:#4b5563;letter-spacing:0.124px;-webkit-text-stroke:0.1px #4b5563;">#12</span>
<span class="t" style="left:542.94px;top:940.00px;font-size:12.4px;color:#18a13a;letter-spacing:0.000px;-webkit-text-stroke:0.45px #18a13a;">0</span>
<span class="t" style="left:553.45px;top:941.00px;font-size:11.8px;color:#5f6672;letter-spacing:0.818px;-webkit-text-stroke:0.1px #5f6672;">available</span>
<span class="t" style="left:620.49px;top:941.00px;font-size:11.8px;color:#5f6672;letter-spacing:0.000px;-webkit-text-stroke:0.1px #5f6672;">0</span>
<span class="t" style="left:631.95px;top:941.00px;font-size:11.8px;color:#5f6672;letter-spacing:1.789px;-webkit-text-stroke:0.1px #5f6672;">out</span>
<span class="t" style="left:666.04px;top:940.00px;font-size:12.4px;color:#1d4577;letter-spacing:0.000px;-webkit-text-stroke:0.45px #1d4577;">0</span>
<span class="t" style="left:676.77px;top:941.00px;font-size:11.8px;color:#5f6672;letter-spacing:0.891px;-webkit-text-stroke:0.1px #5f6672;">reserved</span>
<span class="t" style="left:280.64px;top:425.00px;font-size:11.2px;color:#5f6672;letter-spacing:0.190px;-webkit-text-stroke:0.1px #5f6672;">SURF-LB-8</span>
<span class="t" style="left:280.57px;top:438.00px;font-size:12.8px;color:#143c70;letter-spacing:-0.423px;-webkit-text-stroke:0.25px #143c70;">LB8-</span>
<span class="t" style="left:306.75px;top:438.00px;font-size:12.8px;color:#143c70;letter-spacing:0.000px;-webkit-text-stroke:0.25px #143c70;">1</span>
<span class="t" style="left:318.36px;top:440.00px;font-size:10.2px;color:#6b7280;letter-spacing:0.705px;">#49</span>
<span class="t" style="left:289.14px;top:453.00px;font-size:10.2px;color:#b4232c;letter-spacing:0.506px;-webkit-text-stroke:0.15px #b4232c;">Not available</span>
<span class="t" style="left:280.64px;top:477.00px;font-size:11.2px;color:#5f6672;letter-spacing:0.190px;-webkit-text-stroke:0.1px #5f6672;">SURF-LB-8</span>
<span class="t" style="left:280.57px;top:490.00px;font-size:12.8px;color:#143c70;letter-spacing:0.197px;-webkit-text-stroke:0.25px #143c70;">LB8-2</span>
<span class="t" style="left:320.76px;top:492.00px;font-size:10.2px;color:#6b7280;letter-spacing:0.663px;">#50</span>
<span class="t" style="left:289.14px;top:505.00px;font-size:10.2px;color:#b4232c;letter-spacing:0.506px;-webkit-text-stroke:0.15px #b4232c;">Not available</span>
<span class="t" style="left:280.64px;top:529.00px;font-size:11.2px;color:#5f6672;letter-spacing:0.190px;-webkit-text-stroke:0.1px #5f6672;">SURF-LB-8</span>
<span class="t" style="left:280.57px;top:542.00px;font-size:12.8px;color:#143c70;letter-spacing:0.177px;-webkit-text-stroke:0.25px #143c70;">LB8-3</span>
<span class="t" style="left:320.76px;top:544.00px;font-size:10.2px;color:#6b7280;letter-spacing:0.712px;">#51</span>
<span class="t" style="left:289.14px;top:557.00px;font-size:10.2px;color:#b4232c;letter-spacing:0.506px;-webkit-text-stroke:0.15px #b4232c;">Not available</span>
<span class="t" style="left:280.64px;top:581.00px;font-size:11.2px;color:#5f6672;letter-spacing:0.190px;-webkit-text-stroke:0.1px #5f6672;">SURF-LB-8</span>
<span class="t" style="left:280.57px;top:594.00px;font-size:12.8px;color:#143c70;letter-spacing:0.380px;-webkit-text-stroke:0.25px #143c70;">LB8-4</span>
<span class="t" style="left:321.76px;top:596.00px;font-size:10.2px;color:#6b7280;letter-spacing:0.720px;">#52</span>
<span class="t" style="left:289.14px;top:609.00px;font-size:10.2px;color:#b4232c;letter-spacing:0.506px;-webkit-text-stroke:0.15px #b4232c;">Not available</span>
<span class="t" style="left:280.64px;top:633.00px;font-size:11.2px;color:#5f6672;letter-spacing:0.190px;-webkit-text-stroke:0.1px #5f6672;">SURF-LB-8</span>
<span class="t" style="left:280.57px;top:646.00px;font-size:12.8px;color:#143c70;letter-spacing:0.170px;-webkit-text-stroke:0.25px #143c70;">LB8-5</span>
<span class="t" style="left:320.76px;top:648.00px;font-size:10.2px;color:#6b7280;letter-spacing:0.687px;">#53</span>
<span class="t" style="left:289.93px;top:661.00px;font-size:10.2px;color:#b4530a;letter-spacing:0.515px;-webkit-text-stroke:0.15px #b4530a;">Workshop</span>
<span class="t" style="left:280.64px;top:685.00px;font-size:11.2px;color:#5f6672;letter-spacing:0.195px;-webkit-text-stroke:0.1px #5f6672;">SURF-LB-9</span>
<span class="t" style="left:280.57px;top:698.00px;font-size:12.8px;color:#143c70;letter-spacing:-0.423px;-webkit-text-stroke:0.25px #143c70;">LB9-</span>
<span class="t" style="left:306.75px;top:698.00px;font-size:12.8px;color:#143c70;letter-spacing:0.000px;-webkit-text-stroke:0.25px #143c70;">1</span>
<span class="t" style="left:318.36px;top:700.00px;font-size:10.2px;color:#6b7280;letter-spacing:0.613px;">#54</span>
<span class="t" style="left:289.96px;top:713.00px;font-size:10.2px;color:#15803d;letter-spacing:0.341px;-webkit-text-stroke:0.15px #15803d;">Available</span>
<span class="t" style="left:280.64px;top:737.00px;font-size:11.2px;color:#5f6672;letter-spacing:0.195px;-webkit-text-stroke:0.1px #5f6672;">SURF-LB-9</span>
<span class="t" style="left:280.57px;top:750.00px;font-size:12.8px;color:#143c70;letter-spacing:0.197px;-webkit-text-stroke:0.25px #143c70;">LB9-2</span>
<span class="t" style="left:320.76px;top:752.00px;font-size:10.2px;color:#6b7280;letter-spacing:0.677px;">#55</span>
<span class="t" style="left:289.96px;top:765.00px;font-size:10.2px;color:#15803d;letter-spacing:0.341px;-webkit-text-stroke:0.15px #15803d;">Available</span>
<span class="t" style="left:280.64px;top:789.00px;font-size:11.2px;color:#5f6672;letter-spacing:0.195px;-webkit-text-stroke:0.1px #5f6672;">SURF-LB-9</span>
<span class="t" style="left:280.57px;top:802.00px;font-size:12.8px;color:#143c70;letter-spacing:0.177px;-webkit-text-stroke:0.25px #143c70;">LB9-3</span>
<span class="t" style="left:320.76px;top:804.00px;font-size:10.2px;color:#6b7280;letter-spacing:0.687px;">#56</span>
<span class="t" style="left:289.96px;top:817.00px;font-size:10.2px;color:#15803d;letter-spacing:0.341px;-webkit-text-stroke:0.15px #15803d;">Available</span>
<span class="t" style="left:280.64px;top:841.00px;font-size:11.2px;color:#5f6672;letter-spacing:0.195px;-webkit-text-stroke:0.1px #5f6672;">SURF-LB-9</span>
<span class="t" style="left:280.57px;top:854.00px;font-size:12.8px;color:#143c70;letter-spacing:0.380px;-webkit-text-stroke:0.25px #143c70;">LB9-4</span>
<span class="t" style="left:321.76px;top:856.00px;font-size:10.2px;color:#6b7280;letter-spacing:0.720px;">#57</span>
<span class="t" style="left:289.96px;top:869.00px;font-size:10.2px;color:#15803d;letter-spacing:0.341px;-webkit-text-stroke:0.15px #15803d;">Available</span>
<span class="t" style="left:537.05px;top:646.00px;font-size:12.3px;color:#7a5b0c;letter-spacing:0.605px;-webkit-text-stroke:0.2px #7a5b0c;">WS</span>
</div>
</body></html>
